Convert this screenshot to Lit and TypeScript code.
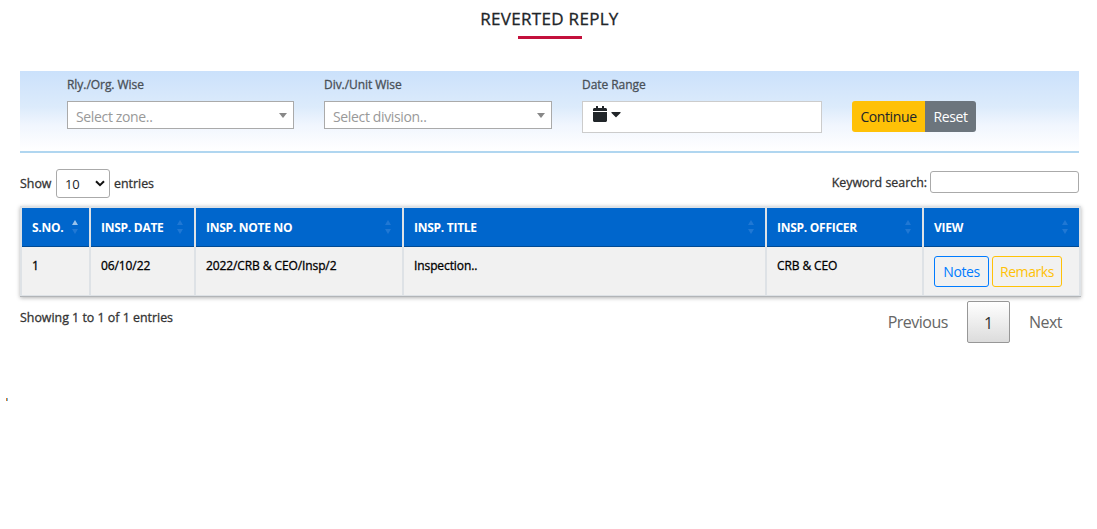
import { LitElement, html, css, svg } from "lit";
import { customElement, property } from "lit/decorators.js";

@customElement("sort-arrows")
class SortArrows extends LitElement {
  @property({ type: Boolean }) active = false;
  static styles = css`
    :host { display: block; width: 6px; height: 14px; }
    svg { display: block; }
  `;
  render() {
    return html`<svg width="6" height="14" viewBox="0 0 6 14">
      ${svg`<path d="M3 0 L6 5 H0 Z" fill=${this.active ? "#99c2eb" : "#2078d4"} />
      <path d="M0 9 H6 L3 14 Z" fill="#2078d4" />`}
    </svg>`;
  }
}

@customElement("app-root")
class AppRoot extends LitElement {
  static styles = css`
    :host {
      display: block;
      height: 529px;
      overflow: hidden;
      background: #fff;
      color: #333;
      font-family: "Open Sans", "Noto Sans", sans-serif;
      font-size: 12px;
      font-weight: 400;
      white-space: nowrap;
    }
    * { box-sizing: border-box; }
    .medium { -webkit-text-stroke: 0.3px currentColor; }
    .title {
      height: 71px;
      padding-top: 7px;
      padding-left: 2px;
      display: flex;
      flex-direction: column;
      align-items: center;
      color: #212529;
    }
    .title h1 {
      margin: 0;
      font-size: 17px;
      font-weight: 400;
      line-height: 23px;
      letter-spacing: 0.3px;
    }
    .bar { width: 64px; height: 3px; margin-top: 6px; background: #c3103c; }
    .panel {
      display: flex;
      height: 82px;
      margin: 0 18px 0 20px;
      padding: 5px 0 0 47px;
      background: linear-gradient(#cbe1fb, #dcebfb 45%, #f1f6fe 68%, #fff);
      border-bottom: 2px solid #b0d6f0;
    }
    .field { color: #495057; margin-right: 30px; }
    .field label { display: block; height: 25px; line-height: 18px; letter-spacing: -0.05px; }
    .combo {
      display: flex;
      align-items: center;
      justify-content: space-between;
      height: 28px;
      padding: 2px 6px 0 8px;
      border: 1px solid #aaa;
      background: #fff;
      color: #999;
      font-size: 14px;
      letter-spacing: -0.35px;
    }
    .caret { width: 8px; height: 5px; display: block; margin-top: -2px; }
    .zone { width: 227px; }
    .division { width: 228px; }
    .dates { width: 240px; }
    .range {
      height: 32px;
      border: 1px solid #ccc;
      background: #fff;
      padding: 4px 0 0 10px;
      display: flex;
      gap: 4px;
    }
    .range svg { display: block; }
    .actions { display: flex; margin-top: 25px; height: 31px; }
    .btn {
      font-size: 14px;
      letter-spacing: -0.4px;
      height: 31px;
      line-height: 31px;
      text-align: center;
    }
    .go { width: 73px; background: #ffc107; color: #212529; border-radius: 3px 0 0 3px; }
    .reset { width: 51px; background: #6c757d; color: #fff; border-radius: 0 3px 3px 0; }
    .tools {
      display: flex;
      justify-content: space-between;
      height: 53px;
      margin: 0 18px 0 20px;
      padding-top: 16px;
      font-size: 12.400px;
    }
    .length { display: flex; height: 29px; align-items: center; line-height: 31px; }
    .show { width: 36px; }
    .pick {
      width: 54px;
      height: 29px;
      margin-right: 4px;
      border: 1px solid #aaa;
      border-radius: 3px;
      display: flex;
      align-items: center;
      justify-content: space-between;
      padding: 1px 4px 0 8px;
      color: #212529;
      font-size: 13px;
      letter-spacing: -0.3px;
    }
    .pick svg { margin-top: -2px; }
    .search { display: flex; height: 22px; margin-top: 2px; line-height: 23px; }
    .box {
      width: 149px;
      height: 22px;
      margin-left: 3px;
      border: 1px solid #aaa;
      border-radius: 3px;
    }
    .table {
      display: grid;
      grid-template-columns: 67px 103px 206px 361px 155px 155px;
      grid-template-rows: 39px 48px;
      column-gap: 2px;
      width: 1061px;
      height: 91px;
      margin-left: 20px;
      padding: 2px 0 0 2px;
      background: #dee2e6;
      border-bottom: 1px solid #b2b5b8;
      box-shadow: 0 1px 4px rgba(0, 0, 0, 0.3);
    }
    .th {
      display: flex;
      justify-content: space-between;
      align-items: center;
      padding: 0 11px 0 10px;
      background: #0066cc;
      border-bottom: 1px solid #004a94;
      color: #fff;
      font-weight: 700;
      letter-spacing: -0.27px;
    }
    .td {
      padding: 10px 0 0 10px;
      background: #f1f1f1;
      color: #000;
      line-height: 18px;
      letter-spacing: -0.1px;
    }
    .view { display: flex; gap: 3px; padding-top: 9px; }
    .outline { height: 31px; line-height: 30px; border: 1px solid; border-radius: 3px; }
    .notes { width: 55px; color: #007bff; }
    .remarks { width: 70px; color: #ffc107; }
    .foot {
      display: flex;
      justify-content: space-between;
      height: 60px;
      margin: 0 35px 0 20px;
      padding-top: 4px;
    }
    .info { font-size: 12.400px; line-height: 18px; padding-top: 8px; }
    .pages { display: flex; font-size: 16px; color: #666; line-height: 43px; letter-spacing: -0.5px; }
    .current {
      width: 43px;
      height: 42px;
      margin: 0 19px;
      border: 1px solid #979797;
      border-radius: 2px;
      background: linear-gradient(#fff, #dcdcdc);
      color: #333;
      text-align: center;
    }
    .mark { display: flex; width: 2px; height: 3px; margin: 41px 0 0 6px; background: linear-gradient(90deg, #e07b20 50%, #62b1e8 50%); }
  `;

  private heads = ["S.NO.", "INSP. DATE", "INSP. NOTE NO", "INSP. TITLE", "INSP. OFFICER", "VIEW"];
  private row = ["1", "06/10/22", "2022/CRB & CEO/Insp/2", "Inspection..", "CRB & CEO"];

  private combo(label: string, hint: string, cls: string) {
    return html`<div class="field ${cls}">
      <label class="medium">${label}</label>
      <div class="combo">
        <span>${hint}</span>
        <svg class="caret" viewBox="0 0 8 5"><path d="M0 0H8L4 5Z" fill="#888" /></svg>
      </div>
    </div>`;
  }

  render() {
    return html`
      <header class="title"><h1 class="medium">REVERTED REPLY</h1><div class="bar"></div></header>
      <section class="panel">
        ${this.combo("Rly./Org. Wise", "Select zone..", "zone")}
        ${this.combo("Div./Unit Wise", "Select division..", "division")}
        <div class="field dates">
          <label class="medium">Date Range</label>
          <div class="range">
            <svg width="14" height="16" viewBox="0 0 448 512" fill="#212529">
              <path d="M0 464c0 26.500 21.500 48 48 48h352c26.500 0 48-21.500 48-48V192H0v272zM400 64h-48V12c0-6.600-5.400-12-12-12h-40c-6.600 0-12 5.400-12 12v52H160V12c0-6.600-5.400-12-12-12h-40c-6.600 0-12 5.400-12 12v52H48C21.500 64 0 85.500 0 112v48h448v-48c0-26.500-21.500-48-48-48z" />
            </svg>
            <svg width="10" height="16" viewBox="0 0 320 512" fill="#212529">
              <path d="M31.300 192h257.300c17.800 0 26.700 21.500 14.100 34.100L174.100 354.800c-7.800 7.800-20.500 7.800-28.300 0L17.200 226.100C4.600 213.500 13.500 192 31.300 192z" />
            </svg>
          </div>
        </div>
        <div class="actions"><div class="btn go">Continue</div><div class="btn reset">Reset</div></div>
      </section>
      <section class="tools">
        <div class="length">
          <span class="show medium">Show</span>
          <div class="pick"><span>10</span>
            <svg width="10" height="7" viewBox="0 0 10 7"><path d="M1 1.200L5 5.200L9 1.200" fill="none" stroke="#111" stroke-width="2" /></svg>
          </div>
          <span class="medium">entries</span>
        </div>
        <div class="search"><span class="medium">Keyword search:</span><div class="box"></div></div>
      </section>
      <section class="table">
        ${this.heads.map((h, i) => html`<div class="th"><span>${h}</span><sort-arrows ?active=${i === 0}></sort-arrows></div>`)}
        ${this.row.map((c) => html`<div class="td medium">${c}</div>`)}
        <div class="td view"><div class="btn outline notes">Notes</div><div class="btn outline remarks">Remarks</div></div>
      </section>
      <footer class="foot">
        <div class="info medium">Showing 1 to 1 of 1 entries</div>
        <div class="pages"><span>Previous</span><div class="current">1</div><span>Next</span></div>
      </footer>
      <div class="mark"></div>
    `;
  }
}
